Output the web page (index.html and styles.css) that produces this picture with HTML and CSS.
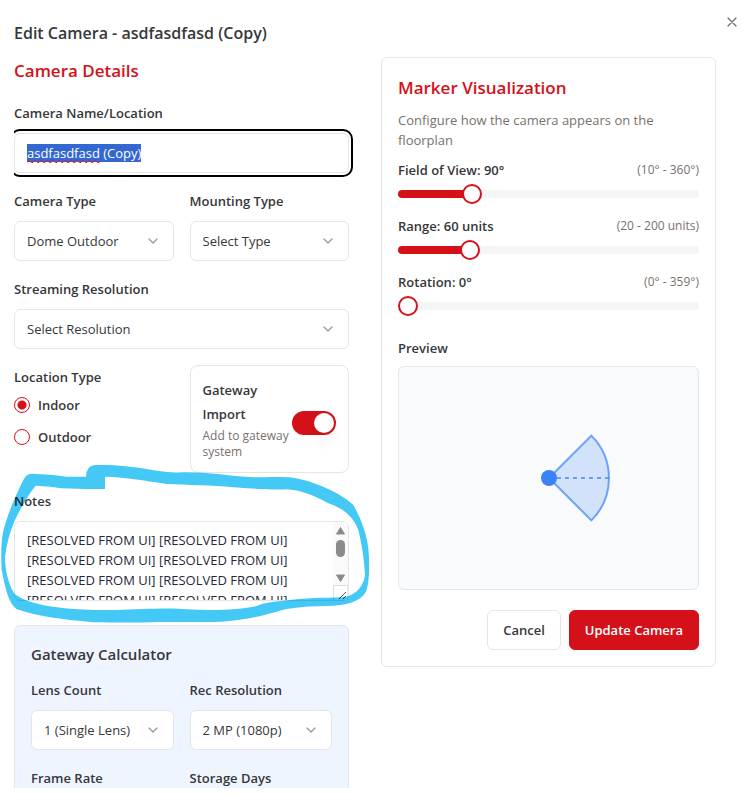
FILE: index.html
```html
<!DOCTYPE html>
<html lang="en">
<head>
<meta charset="utf-8">
<title>Edit Camera</title>
<link rel="stylesheet" href="styles.css">
</head>
<body>
<main class="dialog">
  <header class="dialog-header">
    <h1>Edit Camera - asdfasdfasd (Copy)</h1>
    <button class="close" type="button" aria-label="Close">
      <svg viewBox="0 0 24 24" width="16" height="16" fill="none" stroke="currentColor" stroke-width="2" stroke-linecap="round"><path d="M18 6 6 18M6 6l12 12"/></svg>
    </button>
  </header>
  <form class="content">
    <section class="details">
      <h2>Camera Details</h2>
      <div class="fields">
        <div class="field">
          <label for="name">Camera Name/Location</label>
          <div class="name-box">
            <input class="control" id="name" type="text" value="asdfasdfasd (Copy)" spellcheck="false">
            <svg class="squiggle" height="3" aria-hidden="true">
              <defs><pattern id="wave" width="6" height="3" patternUnits="userSpaceOnUse"><path d="M0 2.5 1.5 .8h1L4.5 2.5H6" fill="none" stroke="#e5142a"/></pattern></defs>
              <rect width="100%" height="3" fill="url(#wave)"/>
            </svg>
          </div>
        </div>
        <div class="pair">
          <div class="field">
            <label for="type">Camera Type</label>
            <select class="control" id="type"><option>Dome Outdoor</option></select>
          </div>
          <div class="field">
            <label for="mount">Mounting Type</label>
            <select class="control" id="mount"><option>Select Type</option></select>
          </div>
        </div>
        <div class="field">
          <label for="stream">Streaming Resolution</label>
          <select class="control" id="stream"><option>Select Resolution</option></select>
        </div>
        <div class="pair">
          <fieldset class="location">
            <legend>Location Type</legend>
            <label class="radio"><input type="radio" name="location" checked>Indoor</label>
            <label class="radio"><input type="radio" name="location">Outdoor</label>
          </fieldset>
          <div class="import">
            <div class="import-text">
              <label for="gateway">Gateway Import</label>
              <p>Add to gateway system</p>
            </div>
            <input class="switch" id="gateway" type="checkbox" role="switch" checked>
          </div>
        </div>
        <div class="field">
          <label for="notes">Notes</label>
          <div class="notes-box">
            <textarea class="control" id="notes" spellcheck="false">[RESOLVED FROM UI] [RESOLVED FROM UI] [RESOLVED FROM UI] [RESOLVED FROM UI] [RESOLVED FROM UI] [RESOLVED FROM UI] [RESOLVED FROM UI] [RESOLVED FROM UI] [RESOLVED FROM UI] [RESOLVED FROM UI] [RESOLVED FROM UI] [RESOLVED FROM UI] [RESOLVED FROM UI] [RESOLVED FROM UI]</textarea>
            <svg class="scrollbar" viewBox="0 0 15 78" width="15" height="78" aria-hidden="true">
              <path d="M0 0H10Q15 0 15 5V78H0Z" fill="#fafafa"/>
              <path d="M7.5 5.5 11.5 12H3.5ZM7.5 59.5 11.5 53H3.5Z" fill="#8b8b8b" stroke="#8b8b8b" stroke-linejoin="round"/>
              <rect x="3" y="18" width="9" height="17" rx="4.5" fill="#8b8b8b"/>
              <path d="M.5 78V63.500H15V78" fill="#fff" stroke="#dcdcdc"/>
              <path d="M6 77 13 70M10 77 13 74" fill="none" stroke="#555"/>
            </svg>
          </div>
        </div>
      </div>
      <section class="calculator">
        <h3>Gateway Calculator</h3>
        <div class="pair rows">
          <div class="field">
            <label for="lens">Lens Count</label>
            <select class="control" id="lens"><option>1 (Single Lens)</option></select>
          </div>
          <div class="field">
            <label for="rec">Rec Resolution</label>
            <select class="control" id="rec"><option>2 MP (1080p)</option></select>
          </div>
          <div class="field">
            <label for="rate">Frame Rate</label>
            <select class="control" id="rate"></select>
          </div>
          <div class="field">
            <label for="days">Storage Days</label>
            <select class="control" id="days"></select>
          </div>
        </div>
      </section>
    </section>
    <section class="marker">
      <h2>Marker Visualization</h2>
      <p class="description">Configure how the camera appears on the floorplan</p>
      <div class="sliders">
        <div>
          <div class="slider-head"><label for="fov">Field of View: 90°</label><span>(10° - 360°)</span></div>
          <input type="range" id="fov" min="10" max="360" value="90" style="--fill:24.6%">
        </div>
        <div>
          <div class="slider-head"><label for="range">Range: 60 units</label><span>(20 - 200 units)</span></div>
          <input type="range" id="range" min="20" max="200" value="60" style="--fill:24%">
        </div>
        <div>
          <div class="slider-head"><label for="rotation">Rotation: 0°</label><span>(0° - 359°)</span></div>
          <input type="range" id="rotation" min="0" max="359" value="0" style="--fill:0%">
        </div>
      </div>
      <h3 class="preview-title">Preview</h3>
      <div class="preview">
        <svg viewBox="-100 -100 200 200" width="200" height="200" role="img" aria-label="Camera coverage">
          <path d="M0 0 42.4-42.4A60 60 0 0 1 42.4 42.4Z" fill="#3b82f6" fill-opacity=".2" stroke="#3b82f6" stroke-opacity=".7" stroke-width="2"/>
          <path d="M0 0H60" stroke="#3b82f6" stroke-opacity=".7" stroke-width="2" stroke-dasharray="4 4"/>
          <circle r="8" fill="#3b82f6"/>
        </svg>
      </div>
      <div class="actions">
        <button class="button" type="button">Cancel</button>
        <button class="button primary" type="button">Update Camera</button>
      </div>
    </section>
  </form>
  <svg class="annotation" viewBox="0 0 1125 540" aria-hidden="true">
    <path fill="#44c8f5" fill-rule="evenodd" d="M95 41 160 45 200 50H258Q258 18 285 15C340 13 400 20 440 27 500 37 510 38 560 37 640 38 700 50 760 52 810 52 860 48 895 56 960 70 1030 105 1060 135 1085 180 1105 230 1107 290 1108 340 1107 370 1098 395 1080 425 1040 437 980 438 900 438 850 448 830 455 780 470 700 485 640 486H480C420 488 360 488 280 487 180 478 110 468 50 448 25 430 15 380 5 330 2 270 5 220 15 195 25 160 45 110 70 60Q78 42 95 41ZM315 50V87H255L185 85 150 80 107 77C80 110 60 150 45 180 30 215 20 250 15 290 15 330 25 370 42 400 70 425 130 440 220 447 260 450 300 450 350 450 420 447 520 443 560 448 640 452 720 450 770 438 800 425 830 425 870 420 940 410 1000 415 1040 410 1070 400 1090 380 1095 345 1093 300 1085 250 1075 210 1060 170 1030 145 985 130 940 105 900 90 860 88 820 90 780 88 700 82 640 75 560 75 500 72 440 62 380 52 315 50Z"/>
  </svg>
</main>
<script src="script.js"></script>
</body>
</html>
```
FILE: styles.css
```css
:root {
  --red: #d41118;
  --text: #37373a;
  --muted: #78716c;
  --border: #e5e5e5;
}
* { box-sizing: border-box; }
body {
  margin: 0;
  background: #fff;
  color: var(--text);
  font: 13px/20px "Open Sans", "Noto Sans", sans-serif;
}
h1, h2, h3, p { margin: 0; }
input, select, textarea, button { font: inherit; color: inherit; margin: 0; }

.dialog {
  position: relative;
  display: flex;
  flex-direction: column;
  height: 100vh;
  padding: 19px 15px 13px 14px;
  overflow: hidden;
}
.dialog-header { padding-bottom: 10px; }
h1 { font-size: 16px; line-height: 28px; font-weight: 600; }
h2 { font-size: 17px; line-height: 28px; font-weight: 600; color: var(--red); }
h3 { font-size: 15px; line-height: 24px; font-weight: 600; }
.close {
  position: absolute;
  top: 14px;
  right: 7px;
  width: 16px;
  height: 16px;
  padding: 0;
  border: 0;
  background: none;
  opacity: .7;
}
.close svg { display: block; }

.content {
  flex: 1;
  min-height: 0;
  display: grid;
  grid-template-columns: 1fr 1fr;
  align-items: start;
  gap: 32px;
  padding-right: 16px;
  overflow: hidden;
}
.fields { display: grid; gap: 16px; margin-top: 16px; }
.pair { display: grid; grid-template-columns: 1fr 1fr; gap: 16px; }
.field { display: grid; gap: 8px; min-width: 0; align-content: start; }
label, legend { line-height: 24px; font-weight: 600; }

.control {
  display: block;
  width: 100%;
  height: 40px;
  padding: 0 12px;
  border: 1px solid var(--border);
  border-radius: 6px;
  background: #fff;
}
select.control {
  appearance: none;
  padding-right: 32px;
  background: #fff url("data:image/svg+xml,%3Csvg xmlns='http://www.w3.org/2000/svg' viewBox='0 0 24 24' fill='none' stroke='%23999' stroke-width='2' stroke-linecap='round' stroke-linejoin='round'%3E%3Cpath d='m6 9 6 6 6-6'/%3E%3C/svg%3E") no-repeat right 12px center / 16px;
}
.name-box, .notes-box { position: relative; }
#name:focus { outline: 2px solid #000; outline-offset: 2px; }
#name::selection { background: #3367d1; color: #fff; }
.squiggle { position: absolute; left: 13px; top: 27px; width: 73px; }

.location { margin: 0; padding: 0; border: 0; }
.location legend { padding: 0; margin-bottom: 4px; }
.radio { display: flex; align-items: center; gap: 8px; margin-bottom: 8px; }
.radio input {
  appearance: none;
  width: 16px;
  height: 16px;
  border: 1px solid var(--red);
  border-radius: 50%;
}
.radio input:checked { background: radial-gradient(circle, var(--red) 4px, transparent 5px); }

.import {
  display: flex;
  align-items: center;
  justify-content: space-between;
  padding: 12px;
  border: 1px solid var(--border);
  border-radius: 8px;
}
.import-text label { display: block; width: min-content; }
.import-text p { margin-top: 2px; font-size: 12px; line-height: 16px; color: var(--muted); }
.switch {
  appearance: none;
  flex: none;
  width: 44px;
  height: 24px;
  margin-top: 8px;
  padding: 2px;
  border-radius: 12px;
  background: var(--red);
}
.switch::before {
  content: "";
  display: block;
  width: 20px;
  height: 20px;
  margin-left: auto;
  border-radius: 50%;
  background: #fff;
  box-shadow: 0 10px 15px -3px rgb(0 0 0 / 10%);
}

textarea.control {
  height: 80px;
  padding: 8px 28px 8px 12px;
  resize: none;
  color: #1f2937;
}
.scrollbar { position: absolute; top: 1px; right: 1px; pointer-events: none; }

.calculator {
  margin-top: 24px;
  padding: 16px;
  border: 1px solid var(--border);
  border-radius: 6px;
  background: #eff5ff;
}
.rows { margin-top: 12px; }

.marker { padding: 16px; border: 1px solid var(--border); border-radius: 6px; }
.description { margin-top: 8px; color: var(--muted); }
.sliders { display: grid; gap: 10px; margin-top: 8px; }
.slider-head { display: flex; justify-content: space-between; align-items: center; }
.slider-head span { font-size: 12px; color: var(--muted); }
input[type="range"] {
  appearance: none;
  display: block;
  width: 100%;
  height: 20px;
  margin-top: 2px;
  background: none;
}
input[type="range"]::-webkit-slider-runnable-track {
  height: 8px;
  border-radius: 4px;
  background: linear-gradient(to right, var(--red) var(--fill), #f5f5f4 var(--fill));
}
input[type="range"]::-webkit-slider-thumb {
  appearance: none;
  width: 20px;
  height: 20px;
  margin-top: -6px;
  border: 2px solid var(--red);
  border-radius: 50%;
  background: #fff;
}
.preview-title { margin-top: 20px; font-size: 13px; }
.preview {
  display: grid;
  place-items: center;
  height: 224px;
  margin-top: 6px;
  border: 1px solid #e2e8f0;
  border-radius: 6px;
  background: #f8fafc;
}
.actions { display: flex; justify-content: flex-end; gap: 8px; margin-top: 20px; }
.button {
  height: 40px;
  padding: 0 15px;
  border: 1px solid var(--border);
  border-radius: 6px;
  background: #fff;
  font-weight: 600;
}
.primary { border-color: var(--red); background: var(--red); color: #fff; }

.annotation {
  position: absolute;
  left: 0;
  top: 460px;
  width: 375px;
  height: 180px;
  mix-blend-mode: multiply;
  pointer-events: none;
}
```
FILE: script.js
```js
const nameInput = document.getElementById("name");
nameInput.focus();
nameInput.select();
```
